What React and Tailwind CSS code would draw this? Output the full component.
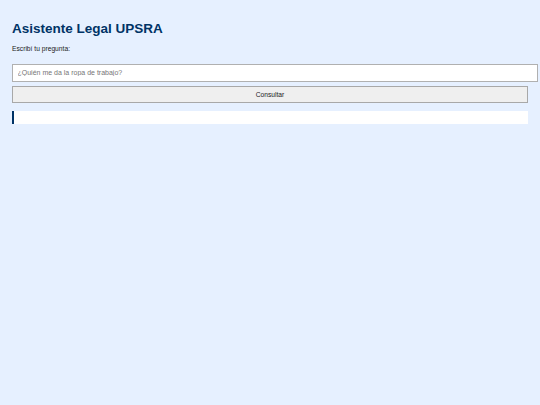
import React from "react";

export default function App() {
  return (
    <div
      className="min-h-screen w-full bg-[#e6f0ff] px-[12px] pt-[21px]"
      style={{ fontFamily: '"Liberation Sans", Arial, sans-serif' }}
    >
      <h1 className="text-[13.5px] leading-[15px] font-bold text-[#003366]">
        Asistente Legal UPSRA
      </h1>
      <label className="block mt-[9px] text-[6.7px] leading-[8px] text-[#222]">
        Escribí tu pregunta:
      </label>
      <input
        type="text"
        placeholder="¿Quién me da la ropa de trabajo?"
        className="block mt-[11px] w-[526px] h-[17.5px] border border-[#b0b0b0] bg-white pl-[4.5px] text-[7px] text-black placeholder:text-[#767676] outline-none"
      />
      <button className="block mt-[4.7px] w-full h-[17px] border border-[#a8a8a8] bg-[#efefef] text-[6.7px] text-[#222]">
        Consultar
      </button>
      <div className="mt-[8px] h-[13px] w-full bg-white border-l-[2px] border-[#003366]"></div>
    </div>
  );
}
